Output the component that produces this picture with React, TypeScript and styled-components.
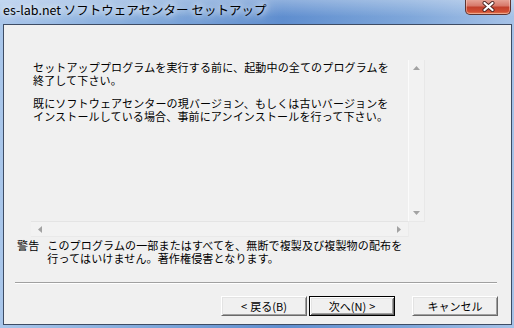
import styled, { createGlobalStyle } from 'styled-components'

const GlobalStyle = createGlobalStyle`
  html, body {
    margin: 0;
    padding: 0;
  }
  body {
    width: 514px;
    height: 328px;
    overflow: hidden;
    font-family: "Noto Sans CJK JP", sans-serif;
  }
`

const Window = styled.div`
  width: 514px;
  height: 328px;
  box-sizing: border-box;
  display: flex;
  flex-direction: column;
  background: linear-gradient(to right, #a9c6ea 0%, #7ea7da 30%, #5f8ecf 55%, #7fa7da 80%, #a6c2e7 100%);
`

const TitleBar = styled.div`
  height: 24px;
  flex: none;
  display: flex;
  align-items: flex-start;
  background: linear-gradient(to bottom, rgba(255, 255, 255, 0.3), rgba(255, 255, 255, 0) 70%);
`

const Title = styled.div`
  padding: 1px 0 0 3px;
  font-size: 12.5px;
  line-height: 18px;
  color: #000;
  white-space: nowrap;
  text-shadow: 0 0 6px rgba(255, 255, 255, 0.95), 0 0 10px rgba(255, 255, 255, 0.85), 0 0 16px rgba(255, 255, 255, 0.7);
`

const CloseButton = styled.div`
  margin: -1px 3px 0 auto;
  width: 46px;
  height: 16px;
  box-sizing: border-box;
  border: 1px solid #5e3430;
  border-top: none;
  border-radius: 0 0 5px 5px;
  background: linear-gradient(to bottom, #e9a99c 0%, #d7796a 45%, #c2402c 55%, #d24f33 85%, #e58a5e 100%);
  box-shadow: inset 0 0 0 1px rgba(255, 220, 210, 0.45);
  display: flex;
  align-items: center;
  justify-content: center;
`

const Client = styled.div`
  flex: 1;
  margin: 0 2px 3px 3px;
  border: 1px solid #3e4c64;
  background: #f0f0f0;
  display: flex;
  flex-direction: column;
  padding: 35px 13px 8px 0;
  font-size: 11px;
  line-height: 13px;
  color: #000;
`

const TextBox = styled.div`
  margin-left: 27px;
  width: 394px;
  height: 177px;
  flex: none;
  display: grid;
  grid-template-columns: 1fr 17px;
  grid-template-rows: 1fr 16px;
`

const TextArea = styled.div`
  padding: 1px 0 0 2px;
  overflow: hidden;
  letter-spacing: 0.15px;
`

const Para = styled.p`
  margin: 0 0 10px;
`

const VScroll = styled.div`
  display: flex;
  flex-direction: column;
  justify-content: space-between;
  align-items: center;
  background: #f2f2f2;
  border-left: 1px solid #fbfbfb;
  border-right: 1px solid #e8e8e8;
  padding: 6px 0 6px;
`

const HScroll = styled.div`
  display: flex;
  justify-content: space-between;
  align-items: center;
  background: #f2f2f2;
  border-top: 1px solid #e4e4e4;
  border-bottom: 1px solid #e9e9e9;
  padding: 0 7px 0 7px;
`

const Corner = styled.div`
  background: #f0f0f0;
  border-top: 1px solid #e8e8e8;
  border-left: 1px solid #ebebeb;
`

const Warning = styled.div`
  display: flex;
  gap: 8px;
  margin: 2px 0 0 13px;
  letter-spacing: 0.15px;
`

const Separator = styled.div`
  margin: 17px 1px 0 11px;
  border-top: 1px solid #a0a0a0;
  border-bottom: 1px solid #ffffff;
`

const ButtonRow = styled.div`
  display: flex;
  justify-content: flex-end;
  margin-top: 12px;
`

const Button = styled.div<{ $default?: boolean; $gap?: number }>`
  width: 86px;
  height: 20px;
  box-sizing: border-box;
  margin-left: ${props => props.$gap ?? 0}px;
  background: #f0f0f0;
  display: flex;
  align-items: center;
  justify-content: center;
  gap: 3px;
  font-size: 11px;
  border: 1px solid;
  border-color: ${props => props.$default ? '#000' : '#fff #696969 #696969 #fff'};
  box-shadow: ${props => props.$default
    ? 'inset 1px 1px #fff, inset -1px -1px #696969, inset 2px 2px #e3e3e3, inset -2px -2px #a0a0a0'
    : 'inset 1px 1px #e3e3e3, inset -1px -1px #a0a0a0'};
`

function Arrow({ dir }: { dir: 'up' | 'down' | 'left' | 'right' }) {
  const points = {
    up: '0,4 3.5,0 7,4',
    down: '0,0 7,0 3.5,4',
    left: '4,0 4,7 0,3.5',
    right: '0,0 0,7 4,3.5',
  }[dir]
  const vertical = dir === 'up' || dir === 'down'
  return (
    <svg width={vertical ? 7 : 4} height={vertical ? 4 : 7} viewBox={vertical ? '0 0 7 4' : '0 0 4 7'}>
      <polygon points={points} fill="#a2a2a2" />
    </svg>
  )
}

export default function App() {
  return (
    <>
      <GlobalStyle />
      <Window>
        <TitleBar>
          <Title>es-lab.net ソフトウェアセンター セットアップ</Title>
          <CloseButton>
            <svg width="13" height="11" viewBox="0 0 13 11">
              <path d="M2.5 2 L10.5 9 M10.5 2 L2.5 9" stroke="#4a2320" strokeWidth="4" strokeLinecap="round" />
              <path d="M2.5 2 L10.5 9 M10.5 2 L2.5 9" stroke="#ffffff" strokeWidth="2.3" strokeLinecap="round" />
            </svg>
          </CloseButton>
        </TitleBar>
        <Client>
          <TextBox>
            <TextArea>
              <Para>
                セットアッププログラムを実行する前に、起動中の全てのプログラムを
                <br />
                終了して下さい。
              </Para>
              <Para>
                既にソフトウェアセンターの現バージョン、もしくは古いバージョンを
                <br />
                インストールしている場合、事前にアンインストールを行って下さい。
              </Para>
            </TextArea>
            <VScroll>
              <Arrow dir="up" />
              <Arrow dir="down" />
            </VScroll>
            <HScroll>
              <Arrow dir="left" />
              <Arrow dir="right" />
            </HScroll>
            <Corner />
          </TextBox>
          <Warning>
            <span>警告</span>
            <span>
              このプログラムの一部またはすべてを、無断で複製及び複製物の配布を
              <br />
              行ってはいけません。著作権侵害となります。
            </span>
          </Warning>
          <Separator />
          <ButtonRow>
            <Button>
              <span>&lt;</span>
              <span>戻る(B)</span>
            </Button>
            <Button $default $gap={2}>
              <span>次へ(N)</span>
              <span>&gt;</span>
            </Button>
            <Button $gap={17}>キャンセル</Button>
          </ButtonRow>
        </Client>
      </Window>
    </>
  )
}
